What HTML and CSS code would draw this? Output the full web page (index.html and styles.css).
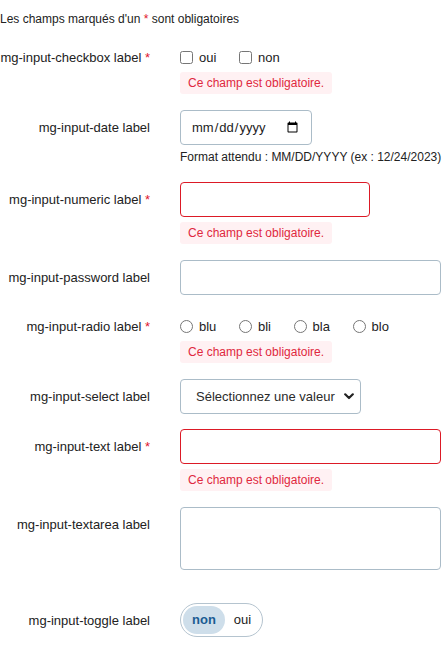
FILE: index.html
```html
<!DOCTYPE html>
<html lang="fr">
<head>
<meta charset="utf-8">
<link rel="stylesheet" href="styles.css">
</head>
<body>
<p class="note">Les champs marqués d'un <span class="req">*</span> sont obligatoires</p>
<form class="form">
  <div class="row row-check">
    <div class="label">mg-input-checkbox label <span class="req">*</span></div>
    <div class="field">
      <div class="group">
        <label class="opt"><input type="checkbox"> oui</label>
        <label class="opt"><input type="checkbox"> non</label>
      </div>
      <div class="error">Ce champ est obligatoire.</div>
    </div>
  </div>
  <div class="row row-date">
    <div class="label">mg-input-date label</div>
    <div class="field">
      <input class="input date" type="date">
      <div class="help">Format attendu : MM/DD/YYYY (ex : 12/24/2023)</div>
    </div>
  </div>
  <div class="row">
    <div class="label">mg-input-numeric label <span class="req">*</span></div>
    <div class="field">
      <input class="input numeric invalid" type="text">
      <div class="error">Ce champ est obligatoire.</div>
    </div>
  </div>
  <div class="row row-pass">
    <div class="label">mg-input-password label</div>
    <div class="field">
      <input class="input full" type="password">
    </div>
  </div>
  <div class="row">
    <div class="label">mg-input-radio label <span class="req">*</span></div>
    <div class="field">
      <div class="group">
        <label class="opt"><input type="radio" name="r"> blu</label>
        <label class="opt"><input type="radio" name="r"> bli</label>
        <label class="opt"><input type="radio" name="r"> bla</label>
        <label class="opt"><input type="radio" name="r"> blo</label>
      </div>
      <div class="error">Ce champ est obligatoire.</div>
    </div>
  </div>
  <div class="row row-select">
    <div class="label">mg-input-select label</div>
    <div class="field">
      <div class="select-wrap">
        <select class="input select"><option>Sélectionnez une valeur</option></select>
        <svg class="chev" width="10" height="7" viewBox="0 0 10 7"><path d="M1.2 1.3 L5 5 L8.8 1.3" fill="none" stroke="#222" stroke-width="2.2" stroke-linecap="round" stroke-linejoin="round"/></svg>
      </div>
    </div>
  </div>
  <div class="row">
    <div class="label">mg-input-text label <span class="req">*</span></div>
    <div class="field">
      <input class="input full invalid" type="text">
      <div class="error">Ce champ est obligatoire.</div>
    </div>
  </div>
  <div class="row row-area">
    <div class="label">mg-input-textarea label</div>
    <div class="field">
      <textarea class="input area"></textarea>
    </div>
  </div>
  <div class="row">
    <div class="label">mg-input-toggle label</div>
    <div class="field">
      <div class="toggle">
        <span class="tog-item on">non</span>
        <span class="tog-item">oui</span>
      </div>
    </div>
  </div>
</form>
</body>
</html>
```
FILE: styles.css
```css
* { box-sizing: border-box; }
html, body { margin: 0; padding: 0; background: #fff; }
body {
  font-family: "Liberation Sans", Arial, sans-serif;
  font-size: 13px;
  color: #222;
  width: 442px;
}
.note {
  margin: 12px 0 0;
  font-size: 12px;
  line-height: 14px;
}
.req { color: #e0182d; }
.form { margin-top: 14px; }
.row {
  display: grid;
  grid-template-columns: 150px 261px;
  column-gap: 30px;
  margin-bottom: 16px;
}
.row-pass { margin-bottom: 14px; }
.row-select { margin-bottom: 15px; }
.row-area { margin-bottom: 33px; }
.label {
  text-align: right;
  line-height: 35px;
  white-space: nowrap;
}
.field { display: flex; flex-direction: column; align-items: flex-start; }
.group {
  display: flex;
  align-items: center;
  height: 27px;
  padding-top: 8px;
  gap: 22.6px;
}
.opt {
  display: flex;
  align-items: center;
  gap: 6px;
  line-height: 18px;
}
.opt input { margin: 0; width: 13px; height: 13px; }
.error {
  margin-top: 5px;
  height: 22px;
  line-height: 22px;
  padding: 0 8px;
  font-size: 12px;
  color: #e0283e;
  background: #fff1f3;
  border-radius: 3px;
}
.input {
  height: 35px;
  border: 1px solid #abbcc8;
  border-radius: 4px;
  background: #fff;
  font-family: inherit;
  font-size: 13px;
  color: #222;
  margin: 0;
  outline: none;
}
.input.invalid { border-color: #dc1a26; }
.date { width: 132px; padding: 0 10px 0 10px; }
.help { margin-top: 3px; font-size: 12px; line-height: 18px; white-space: nowrap; }
.numeric { width: 190px; }
.full { width: 261px; }
.select-wrap { position: relative; }
.select {
  width: 181px;
  appearance: none;
  -webkit-appearance: none;
  padding: 0 0 0 15px;
  color: #2b2b2b;
}
.chev { position: absolute; right: 7px; top: 14px; pointer-events: none; }
.area { width: 261px; height: 63px; resize: none; }
.toggle {
  display: flex;
  align-items: center;
  height: 34px;
  padding: 2px;
  border: 1px solid #b5c4cf;
  border-radius: 17px;
}
.tog-item {
  height: 28px;
  line-height: 28px;
  padding: 0 9px;
  border-radius: 14px;
  color: #222;
}
.tog-item.on {
  background: #cedeea;
  color: #1a5c92;
  font-weight: bold;
}
```
